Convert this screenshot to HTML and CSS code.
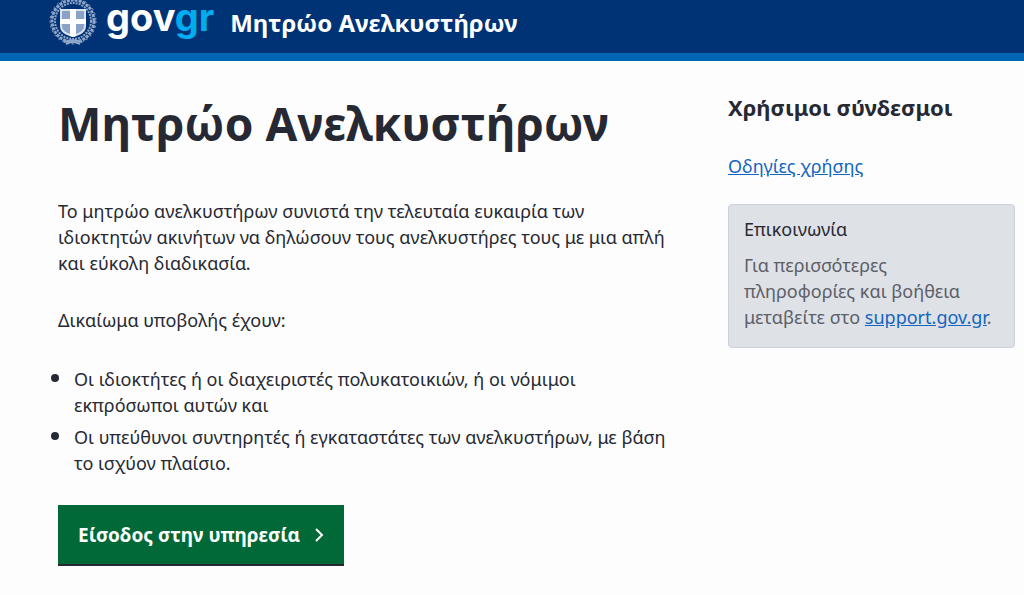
FILE: index.html
```html
<!DOCTYPE html>
<html lang="el">
<head>
  <meta charset="UTF-8">
  <meta name="viewport" content="width=device-width, initial-scale=1.0">
  <title>Μητρώο Ανελκυστήρων</title>
  <link rel="stylesheet" href="styles.css">
</head>
<body>
  <header class="header">
    <svg class="emblem" viewBox="0 0 48 48" aria-hidden="true">
      <g fill="none" stroke="#8fa6c9">
        <circle cx="24" cy="21" r="21" stroke-width="3" stroke-dasharray="3 1"/>
        <circle cx="24" cy="21" r="18" stroke-width="2" stroke-dasharray="2 1"/>
        <circle cx="24" cy="21" r="23" stroke-width="1" stroke-dasharray="2 3"/>
        <path d="M15 42l7-2 9 4M33 42l-7-2-9 4" stroke-width="2"/>
      </g>
      <path d="M11 9h26v17c0 6-5 9-13 11-8-2-13-5-13-11z" fill="#dbe3ef"/>
      <path d="M13 11h8v8h-8zM27 11h8v8h-8zM13 24h8v10c-5-2-8-4-8-8zM27 24h8v2c0 4-3 6-8 8z" fill="#8ba2c6"/>
      <path d="M21 9h6v10h10v5H27v12l-3 1-3-1V24H11v-5h10z" fill="#fff"/>
    </svg>
    <span class="logo">gov<span class="logo-gr">gr</span></span>
    <span class="service-name">Μητρώο Ανελκυστήρων</span>
  </header>

  <div class="container">
    <main>
      <h1>Μητρώο Ανελκυστήρων</h1>
      <p>Το μητρώο ανελκυστήρων συνιστά την τελευταία ευκαιρία των ιδιοκτητών ακινήτων να δηλώσουν τους ανελκυστήρες τους με μια απλή και εύκολη διαδικασία.</p>
      <p>Δικαίωμα υποβολής έχουν:</p>
      <ul>
        <li>Οι ιδιοκτήτες ή οι διαχειριστές πολυκατοικιών, ή οι νόμιμοι εκπρόσωποι αυτών και</li>
        <li>Οι υπεύθυνοι συντηρητές ή εγκαταστάτες των ανελκυστήρων, με βάση το ισχύον πλαίσιο.</li>
      </ul>
      <button type="button" class="start">
        Είσοδος στην υπηρεσία
        <svg class="arrow" viewBox="0 0 10 14" aria-hidden="true"><path d="M2 1l6 6-6 6" fill="none" stroke="#fff" stroke-width="2"/></svg>
      </button>
    </main>

    <aside>
      <h2>Χρήσιμοι σύνδεσμοι</h2>
      <a href="#">Οδηγίες χρήσης</a>
      <div class="card">
        <h3>Επικοινωνία</h3>
        <p>Για περισσότερες πληροφορίες και βοήθεια μεταβείτε στο <a href="#">support.gov.gr</a>.</p>
      </div>
    </aside>
  </div>
</body>
</html>
```
FILE: styles.css
```css
* {
  box-sizing: border-box;
}

body {
  margin: 0;
  font-family: "Noto Sans", sans-serif;
  font-size: 18px;
  line-height: 26px;
  color: #262933;
  background: #fdfdfd;
}

h1, h2, h3, p, ul {
  margin: 0;
}

a {
  color: #1465c0;
}

.header {
  display: flex;
  align-items: flex-start;
  height: 61px;
  padding-left: 49px;
  background: #003375;
  border-bottom: 8px solid #0065b3;
}

.emblem {
  width: 48px;
  height: 48px;
}

.logo {
  margin-left: 9px;
  font-family: Inter, sans-serif;
  font-size: 38px;
  font-weight: 700;
  line-height: 34px;
  color: #fff;
}

.logo-gr {
  color: #00abee;
}

.service-name {
  margin-left: 16px;
  font-size: 24px;
  font-weight: bold;
  line-height: 46px;
  color: #fff;
}

.container {
  display: grid;
  grid-template-columns: minmax(0, 1fr) 287px;
  gap: 48px;
  padding: 32px 9px 30px 58px;
}

h1 {
  margin-bottom: 45px;
  font-size: 46px;
  line-height: 60px;
}

main p {
  margin-bottom: 31px;
}

ul {
  margin-bottom: 29px;
  padding-left: 16px;
}

li::marker {
  font-size: 22px;
}

li + li {
  margin-top: 4px;
}

.start {
  display: inline-flex;
  align-items: center;
  gap: 14px;
  height: 61px;
  padding: 0 20px;
  border: 0;
  border-bottom: 2px solid #262933;
  background: #006937;
  color: #fff;
  font-family: inherit;
  font-size: 19px;
  font-weight: 700;
  cursor: pointer;
}

.arrow {
  width: 10px;
  height: 14px;
}

h2 {
  margin-bottom: 32px;
  font-size: 22px;
  line-height: 28px;
}

.card {
  margin-top: 25px;
  padding: 11px 15px 17px;
  background: #dee1e6;
  border: 1px solid #cbd1d9;
  border-radius: 4px;
}

.card h3 {
  margin-bottom: 10px;
  font-size: 18px;
  font-weight: normal;
}

.card p {
  color: #5c5f68;
}
```
